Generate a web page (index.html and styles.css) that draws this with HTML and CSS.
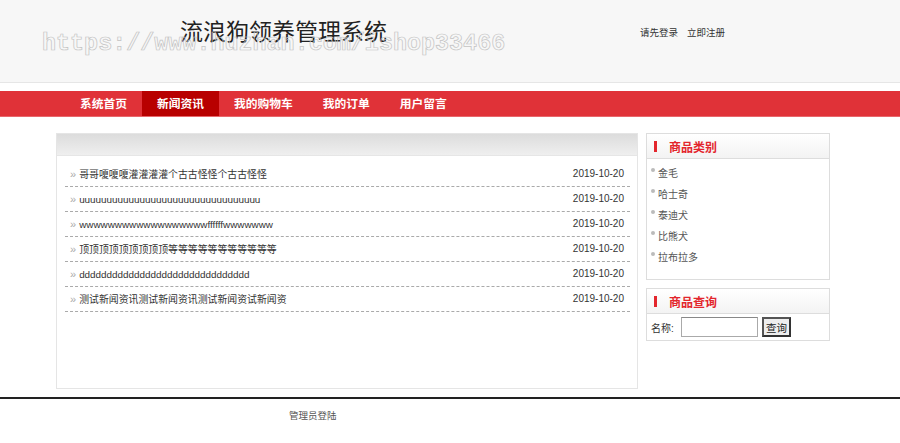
FILE: index.html
```html
<!DOCTYPE html>
<html lang="zh-CN">
<head>
    <meta charset="UTF-8">
    <title>流浪狗领养管理系统</title>
    <link rel="stylesheet" href="styles.css">
</head>
<body>
    <div class="top">
        <div class="top-in">
            <h1 class="logo">流浪狗领养管理系统</h1>
            <div class="login">
                <a href="#">请先登录</a>
                <a href="#">立即注册</a>
            </div>
        </div>
        <span class="mark">https://www.huzhan.com/ishop33466</span>
    </div>
    <div class="nav">
        <ul>
            <li><a href="#">系统首页</a></li>
            <li class="on"><a href="#">新闻资讯</a></li>
            <li><a href="#">我的购物车</a></li>
            <li><a href="#">我的订单</a></li>
            <li><a href="#">用户留言</a></li>
        </ul>
    </div>
    <div class="main">
        <div class="left">
            <div class="left-hd"></div>
            <ul class="news">
                <li><a href="#"><i>&raquo;</i>哥哥嗄嗄嗄灌灌灌灌个古古怪怪个古古怪怪</a><span>2019-10-20</span></li>
                <li><a href="#"><i>&raquo;</i>uuuuuuuuuuuuuuuuuuuuuuuuuuuuuuuuu</a><span>2019-10-20</span></li>
                <li><a href="#"><i>&raquo;</i>wwwwwwwwwwwwwwwwwwffffffwwwwwww</a><span>2019-10-20</span></li>
                <li><a href="#"><i>&raquo;</i>顶顶顶顶顶顶顶顶顶等等等等等等等等等等等</a><span>2019-10-20</span></li>
                <li><a href="#"><i>&raquo;</i>ddddddddddddddddddddddddddddddd</a><span>2019-10-20</span></li>
                <li><a href="#"><i>&raquo;</i>测试新闻资讯测试新闻资讯测试新闻资试新闻资</a><span>2019-10-20</span></li>
            </ul>
        </div>
        <div class="right">
            <div class="box">
                <div class="box-hd"><b></b>商品类别</div>
                <ul class="cate">
                    <li><a href="#">金毛</a></li>
                    <li><a href="#">哈士奇</a></li>
                    <li><a href="#">泰迪犬</a></li>
                    <li><a href="#">比熊犬</a></li>
                    <li><a href="#">拉布拉多</a></li>
                </ul>
            </div>
            <div class="box">
                <div class="box-hd"><b></b>商品查询</div>
                <form class="search">
                    <label>名称:</label>
                    <input type="text">
                    <button type="button">查询</button>
                </form>
            </div>
        </div>
    </div>
    <div class="foot">
        <a href="#">管理员登陆</a>
    </div>
</body>
</html>
```

FILE: styles.css
```css
* {
    margin: 0;
    padding: 0;
}
body{
    font-family: "Liberation Sans", "Noto Sans CJK SC", sans-serif;
    font-size: 10px;
    color: #333;
    background-color: #fff;
}
a{
    text-decoration: none;
    color: #333;
}
ul{
    list-style: none;
}
.top{
    position: relative;
    height: 82px;
    background-color: #f7f7f7;
    border-bottom: 1px solid #e6e6e6;
}
.top-in{
    display: flex;
    padding-left: 180px;
}
.logo{
    font-size: 23px;
    font-weight: normal;
    line-height: 23px;
    color: #222;
    margin-top: 21px;
    width: 460px;
}
.login{
    display: flex;
    gap: 9px;
    margin-top: 27px;
    font-size: 9.5px;
    line-height: 12px;
}
.login a{
    color: #333;
}
.mark{
    position: absolute;
    left: 42px;
    top: 30px;
    font-family: "Liberation Mono", monospace;
    font-weight: bold;
    font-size: 23.4px;
    line-height: 28px;
    color: transparent;
    -webkit-text-stroke: 0.7px #c4c4c4;
    white-space: nowrap;
    pointer-events: none;
}
.nav{
    margin-top: 8px;
    height: 26px;
    background-color: #e03238;
    border-bottom: 1px solid #e8676b;
    box-sizing: border-box;
}
.nav ul{
    display: flex;
    padding-left: 65px;
}
.nav li a{
    display: block;
    padding: 0 15px;
    height: 25px;
    line-height: 25px;
    font-size: 11.75px;
    font-weight: bold;
    color: #fff;
}
.nav li.on a{
    background-color: #b80000;
}
.main{
    display: flex;
    margin: 16px 0 0 56px;
    align-items: flex-start;
}
.left{
    width: 580px;
    height: 254px;
    border: 1px solid #e5e5e5;
}
.left-hd{
    height: 21px;
    background: linear-gradient(#dcdcdc, #efefef);
    border-bottom: 1px solid #e6e6e6;
}
.news{
    padding: 6px 7px 0 8px;
}
.news li{
    display: flex;
    justify-content: space-between;
    height: 24px;
    line-height: 24px;
    border-bottom: 1px dashed #aaa;
    padding: 0 6px 0 5px;
    font-size: 9.9px;
}
.news li a{
    color: #333;
}
.news li i{
    font-style: normal;
    font-size: 11px;
    color: #aaa;
    margin-right: 3px;
}
.news li span{
    font-size: 10px;
    color: #333;
}
.right{
    margin-left: 8px;
    width: 184px;
    display: flex;
    flex-direction: column;
    gap: 8px;
}
.box{
    border: 1px solid #ddd;
}
.box-hd{
    display: flex;
    align-items: center;
    height: 24px;
    border-bottom: 1px solid #ddd;
    background: linear-gradient(#fff, #f3f3f3);
    font-size: 12px;
    font-weight: bold;
    color: #e3262d;
}
.box-hd b{
    width: 3px;
    height: 11px;
    background-color: #e3262d;
    margin: 0 12px 0 7px;
}
.cate{
    padding: 3px 0 12px 4px;
}
.cate li{
    display: flex;
    align-items: center;
    height: 21px;
}
.cate li::before{
    content: "";
    width: 4px;
    height: 4px;
    border-radius: 50%;
    background-color: #bbb;
    margin: -5px 3px 0 0;
}
.cate li a{
    color: #555;
    font-size: 10px;
}
.search{
    display: flex;
    align-items: center;
    height: 26px;
    padding-left: 4px;
}
.search label{
    font-size: 10px;
    color: #333;
    width: 30px;
}
.search input{
    width: 77px;
    height: 20px;
    box-sizing: border-box;
    border: 1px solid #aaa;
    border-top-color: #888;
    margin-right: 4px;
}
.search button{
    width: 29px;
    height: 20px;
    font-family: "Liberation Sans", "Noto Sans CJK SC", sans-serif;
    font-size: 10.5px;
    color: #222;
    background-color: #eee;
    border: 2px solid #555;
    border-right-color: #333;
    border-bottom-color: #333;
}
.foot{
    margin-top: 8px;
    border-top: 2px solid #222;
    padding: 9px 0 0 289px;
    height: 30px;
}
.foot a{
    font-size: 9.5px;
    color: #555;
}
```
